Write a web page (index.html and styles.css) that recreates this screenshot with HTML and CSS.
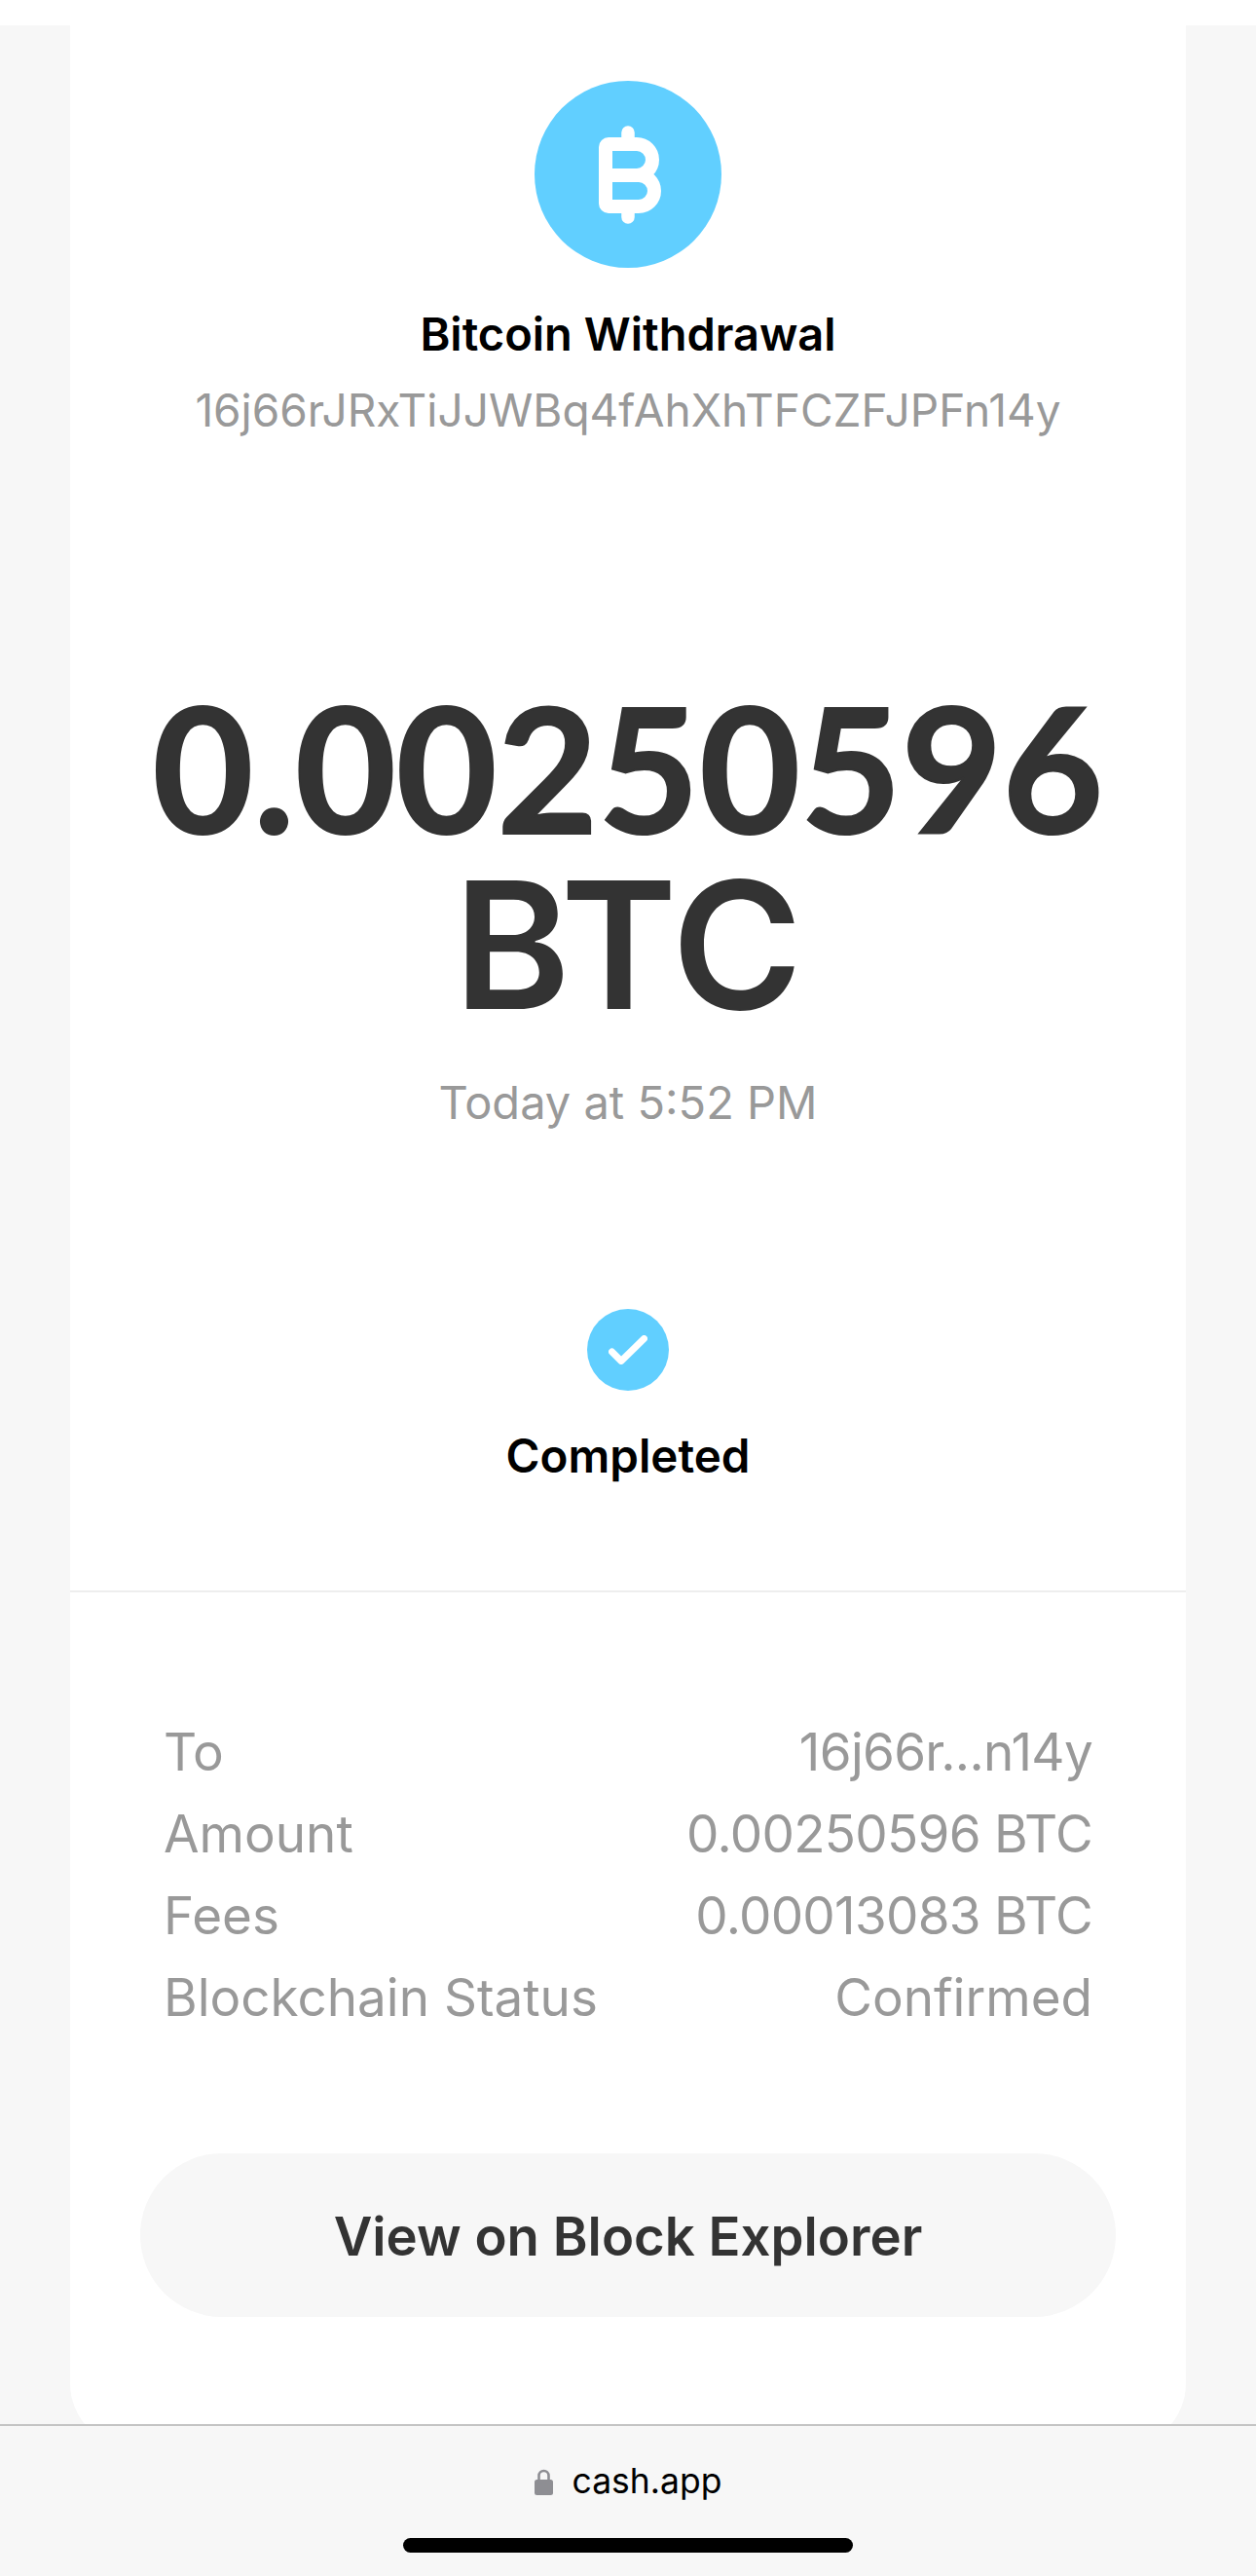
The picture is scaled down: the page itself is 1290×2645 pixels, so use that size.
FILE: index.html
```html
<!DOCTYPE html>
<html lang="en">
<head>
  <meta charset="UTF-8">
  <meta name="viewport" content="width=device-width, initial-scale=1.0">
  <title>Bitcoin Withdrawal</title>
  <link rel="stylesheet" href="styles.css">
</head>
<body>
  <div class="top-strip"></div>
  <main class="page">
    <section class="card">
      <div class="summary">
        <div class="coin">
          <svg class="coin-icon" width="64" height="101" viewBox="0 0 64 101" fill="none" stroke="#fff" stroke-width="14" stroke-linecap="butt">
            <path d="M7 80 V22 A3 3 0 0 1 10 19 H39 A16 16 0 0 1 39 51 H7"/>
            <path d="M7 51 H41 A16 16 0 0 1 41 83 H10 A3 3 0 0 1 7 80"/>
            <path d="M30 7 V19 M30 83 V94" stroke-width="13.5" stroke-linecap="round"/>
          </svg>
        </div>
        <h1 class="title">Bitcoin Withdrawal</h1>
        <p class="address">16j66rJRxTiJJWBq4fAhXhTFCZFJPFn14y</p>
        <p class="amount"><span class="amount-num">0.00250596</span><br>BTC</p>
        <p class="date">Today at 5:52 PM</p>
        <div class="check">
          <svg width="40" height="30" viewBox="0 0 40 30" fill="none" stroke="#fff" stroke-width="7" stroke-linecap="round" stroke-linejoin="round">
            <path d="M3.5 17 L13 26.5 L36.5 3.5"/>
          </svg>
        </div>
        <p class="status">Completed</p>
      </div>
      <div class="details">
        <dl class="rows">
          <div class="row"><dt>To</dt><dd class="num">16j66r...n14y</dd></div>
          <div class="row"><dt>Amount</dt><dd class="num">0.00250596 BTC</dd></div>
          <div class="row"><dt>Fees</dt><dd class="num">0.00013083 BTC</dd></div>
          <div class="row"><dt>Blockchain Status</dt><dd>Confirmed</dd></div>
        </dl>
        <a class="explorer" href="#">View on Block Explorer</a>
      </div>
    </section>
  </main>
  <footer class="browser-bar">
    <div class="url">
      <svg class="lock" width="19" height="27" viewBox="0 0 19 27">
        <path d="M4.5 12 V7 A5 5 0 0 1 14.5 7 V12" fill="none" stroke="#8e8e93" stroke-width="2.6"/>
        <rect x="0" y="11" width="19" height="16" rx="2.5" fill="#8e8e93"/>
      </svg>
      <span>cash.app</span>
    </div>
    <div class="home-bar"></div>
  </footer>
</body>
</html>
```

FILE: styles.css
```css
:root {
  --bg-color: #f7f7f7;
  --blue: #61cfff;
  --dark: #333;
  --gray: #999;
}
html, body {
  margin: 0;
  padding: 0;
}
body {
  width: 1290px;
  height: 2645px;
  overflow: hidden;
  display: flex;
  flex-direction: column;
  background-color: var(--bg-color);
  font-family: Inter, "Liberation Sans", sans-serif;
}
.top-strip {
  height: 26px;
  background-color: #fff;
}
.page {
  height: 2463px;
  padding: 0 72px;
  overflow: hidden;
}
.card {
  height: 2487px;
  background-color: #fff;
  border-radius: 0 0 66px 66px;
  text-align: center;
}
/* 上半部分 */
.summary {
  height: 1609px;
  padding-top: 57px;
  box-sizing: border-box;
  border-bottom: 2px solid #eee;
}
.coin {
  width: 192px;
  height: 192px;
  margin: 0 auto;
  border-radius: 50%;
  background-color: var(--blue);
  display: flex;
  align-items: center;
  justify-content: center;
}
.coin-icon {
  margin-left: 4px;
}
.title {
  margin: 40px 0 0;
  font-size: 47px;
  line-height: 56px;
  font-weight: 600;
  color: #000;
}
.address {
  margin: 22px 0 0;
  font-size: 46px;
  line-height: 56px;
  color: var(--gray);
}
.amount {
  margin: 248px 0 0;
  font-size: 182px;
  line-height: 180px;
  font-weight: 600;
  color: var(--dark);
}
.amount-num {
  font-family: Lato, Inter, sans-serif;
  font-size: 179px;
  font-weight: 700;
  -webkit-text-stroke: 2px var(--dark);
}
.date {
  margin: 44px 0 0;
  font-size: 47px;
  line-height: 56px;
  color: var(--gray);
}
.check {
  width: 84px;
  height: 84px;
  margin: 184px auto 0;
  border-radius: 50%;
  background-color: var(--blue);
  display: flex;
  align-items: center;
  justify-content: center;
}
.status {
  margin: 39px 0 0;
  font-size: 47.5px;
  line-height: 56px;
  font-weight: 600;
  color: #000;
}
/* 明细 */
.details {
  padding: 122px 96px 0;
}
.rows {
  margin: 0;
}
.row {
  display: flex;
  justify-content: space-between;
  height: 84px;
  font-size: 53px;
  line-height: 84px;
  color: var(--gray);
}
.row dd {
  margin: 0;
}
.row .num {
  letter-spacing: -0.7px;
}
.explorer {
  display: block;
  margin: 118px -24px 0;
  height: 168px;
  line-height: 170px;
  border-radius: 84px;
  background-color: var(--bg-color);
  color: var(--dark);
  font-size: 54.5px;
  font-weight: 600;
  text-decoration: none;
}
/* 浏览器底栏 */
.browser-bar {
  flex: 1;
  position: relative;
  z-index: 1;
  border-top: 2px solid #c4c4c4;
  background-color: var(--bg-color);
  display: flex;
  flex-direction: column;
  align-items: center;
}
.url {
  display: flex;
  align-items: center;
  gap: 20px;
  margin-top: 37px;
  font-family: Inter, sans-serif;
  font-size: 35.5px;
  line-height: 40px;
  color: #000;
}
.home-bar {
  width: 462px;
  height: 15px;
  margin-top: 38px;
  border-radius: 8px;
  background-color: #000;
}
```
